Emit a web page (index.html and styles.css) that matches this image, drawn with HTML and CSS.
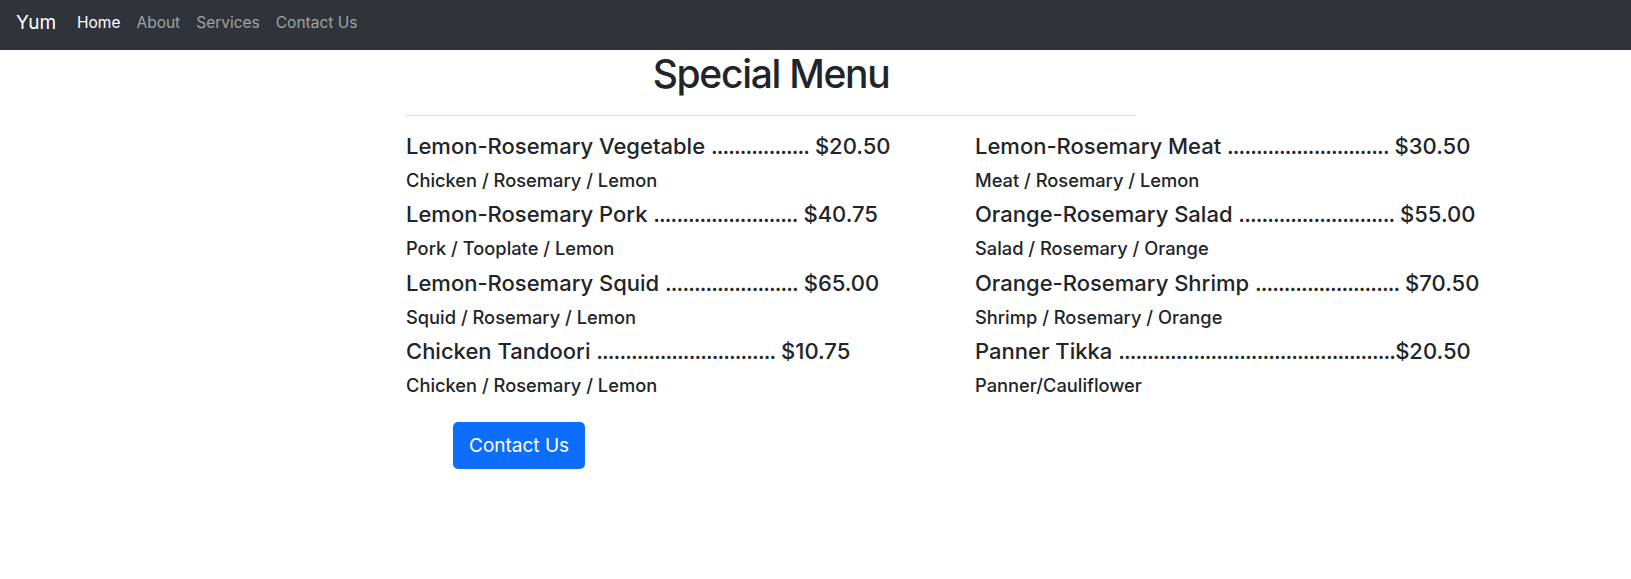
FILE: index.html
```html
<!DOCTYPE html>
<html lang="en">
<head>
<meta charset="utf-8">
<title>Yum - Special Menu</title>
<link rel="stylesheet" href="styles.css">
</head>
<body>
<nav class="navbar">
  <a class="brand" href="#">Yum</a>
  <ul class="nav">
    <li><a class="nav-link active" href="#">Home</a></li>
    <li><a class="nav-link" href="#">About</a></li>
    <li><a class="nav-link" href="#">Services</a></li>
    <li><a class="nav-link" href="#">Contact Us</a></li>
  </ul>
</nav>
<main class="page">
  <div class="menu-head">
    <h1 class="title">Special Menu</h1>
    <hr class="rule">
  </div>
  <div class="menu-grid">
    <div class="col">
      <div class="item"><h5 class="item-name">Lemon-Rosemary Vegetable <span class="dots">.................</span> $20.50</h5><p class="item-desc">Chicken / Rosemary / Lemon</p></div>
      <div class="item"><h5 class="item-name">Lemon-Rosemary Pork <span class="dots">.........................</span> $40.75</h5><p class="item-desc">Pork / Tooplate / Lemon</p></div>
      <div class="item"><h5 class="item-name">Lemon-Rosemary Squid <span class="dots">.......................</span> $65.00</h5><p class="item-desc">Squid / Rosemary / Lemon</p></div>
      <div class="item"><h5 class="item-name">Chicken Tandoori <span class="dots">...............................</span> $10.75</h5><p class="item-desc">Chicken / Rosemary / Lemon</p></div>
    </div>
    <div class="col">
      <div class="item"><h5 class="item-name">Lemon-Rosemary Meat <span class="dots">............................</span> $30.50</h5><p class="item-desc">Meat / Rosemary / Lemon</p></div>
      <div class="item"><h5 class="item-name">Orange-Rosemary Salad <span class="dots">...........................</span> $55.00</h5><p class="item-desc">Salad / Rosemary / Orange</p></div>
      <div class="item"><h5 class="item-name">Orange-Rosemary Shrimp <span class="dots">.........................</span> $70.50</h5><p class="item-desc">Shrimp / Rosemary / Orange</p></div>
      <div class="item"><h5 class="item-name">Panner Tikka <span class="dots">................................................</span>$20.50</h5><p class="item-desc">Panner/Cauliflower</p></div>
    </div>
  </div>
  <div class="actions">
    <a class="btn" href="#">Contact Us</a>
  </div>
</main>
</body>
</html>
```

FILE: styles.css
```css
* { box-sizing: border-box; }
html, body { margin: 0; padding: 0; }
body {
  font-family: Inter, "Noto Sans", "Liberation Sans", sans-serif;
  color: #212529;
  background: #fff;
}
a { text-decoration: none; }

.navbar {
  height: 50px;
  background: #2f333a;
  display: flex;
  align-items: center;
  padding: 0 16px 5px;
}
.brand {
  color: #fff;
  font-size: 19px;
  margin-right: 13px;
}
.nav {
  list-style: none;
  margin: 0;
  padding: 0;
  display: flex;
}
.nav-link {
  display: block;
  padding: 0 8px;
  font-size: 15.5px;
  color: rgba(255, 255, 255, 0.55);
}
.nav-link.active { color: #fff; }

.page {
  padding-left: 406px;
}
.menu-head {
  width: 730px;
}
.title {
  margin: 4px 0 0;
  font-size: 39px;
  line-height: 40px;
  font-weight: 500;
  letter-spacing: -1.3px;
  text-align: center;
}
.rule {
  margin: 21px 0 0;
  border: 0;
  border-top: 1px solid #dedede;
}
.menu-grid {
  display: grid;
  grid-template-columns: 569px 569px;
  margin-top: 17px;
}
.item {
  margin-bottom: 10.3px;
}
.item-name {
  margin: 0;
  font-size: 22px;
  line-height: 26px;
  font-weight: 500;
}
.dots {
  letter-spacing: -0.9px;
}
.item-desc {
  margin: 10px 0 0;
  font-size: 18.3px;
  line-height: 22px;
  font-weight: 500;
}
.actions {
  padding-left: 47px;
  margin-top: 16px;
}
.btn {
  display: inline-block;
  background: #0d6efd;
  color: #fff;
  font-size: 19px;
  line-height: 31px;
  padding: 8px 16px;
  border-radius: 5px;
}
```
